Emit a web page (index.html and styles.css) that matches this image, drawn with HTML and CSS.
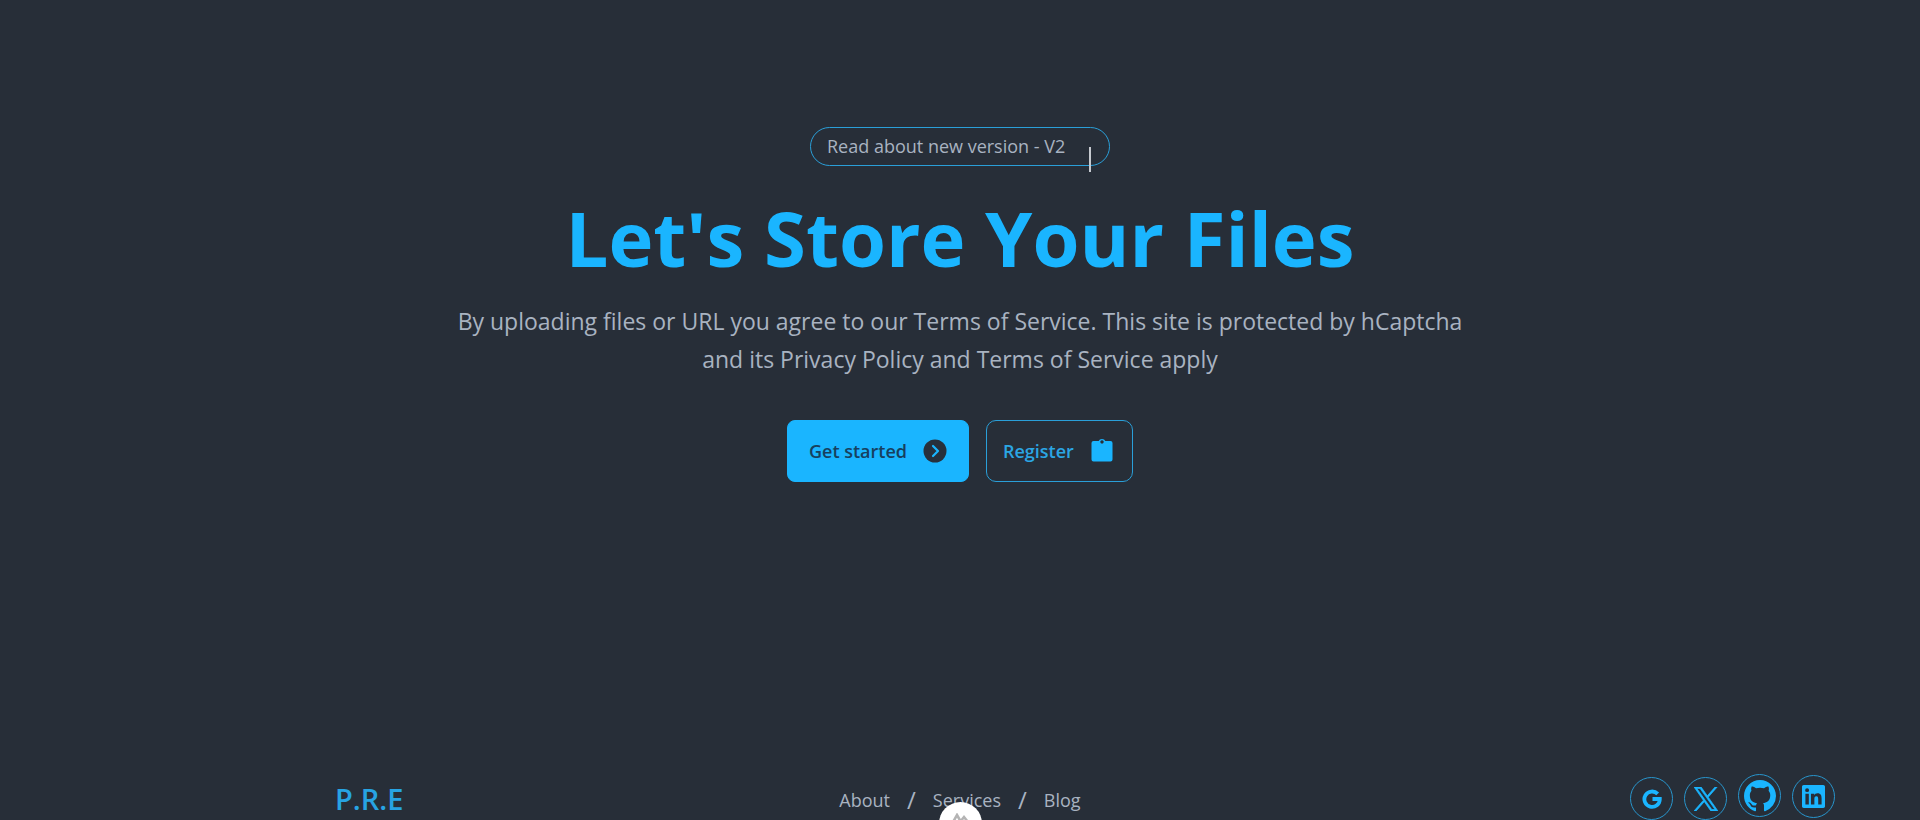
FILE: index.html
```html
<!DOCTYPE html>
<html lang="en">
<head>
<meta charset="utf-8">
<meta name="viewport" content="width=device-width, initial-scale=1">
<title>Let's Store Your Files</title>
<link rel="stylesheet" href="styles.css">
</head>
<body>
<main class="hero">
  <a class="version" href="#">Read about new version - V2<span class="caret"></span></a>
  <h1 class="title">Let's Store Your Files</h1>
  <p class="lead">By uploading files or URL you agree to our Terms of Service. This site is protected by hCaptcha<br>and its Privacy Policy and Terms of Service apply</p>
  <div class="actions">
    <button class="btn btn-primary" type="button">Get started
      <svg class="icon" viewBox="0 0 24 24" aria-hidden="true"><circle cx="12" cy="12" r="11.5" fill="#27303c"/><path d="M10 7l5 5-5 5" fill="none" stroke="#1ab5ff" stroke-width="2.2" stroke-linecap="round" stroke-linejoin="round"/></svg>
    </button>
    <button class="btn btn-outline" type="button">Register
      <svg class="icon" viewBox="0 0 24 24" aria-hidden="true"><path fill="#1ab5ff" fill-rule="evenodd" d="M3.500 2H8.700Q9.500 0 12 0T15.300 2H20.500Q22.500 2 22.500 4V20.500Q22.500 22.500 20.500 22.500H3.500Q1.500 22.500 1.500 20.500V4Q1.500 2 3.500 2ZM12 1.200a1.700 1.700 0 1 0 .01 0Z"/></svg>
    </button>
  </div>
</main>
<footer class="footer">
  <a class="brand" href="#">P.R.E</a>
  <nav class="links" aria-label="Footer">
    <a href="#">About</a><span class="slash">/</span><a href="#">Services</a><span class="slash">/</span><a href="#">Blog</a>
  </nav>
  <div class="social">
    <a href="#" aria-label="Google"><svg width="20" height="20" viewBox="0 0 20 20"><path d="M15.700 4.900A7.700 7.700 0 1 0 17.800 10H10.500" fill="none" stroke="currentColor" stroke-width="3.800"/></svg></a>
    <a href="#" aria-label="X"><svg width="24" height="24" viewBox="0 0 24 24"><path fill="currentColor" stroke="currentColor" stroke-width=".7" d="M14.258 10.152 23.176 0h-2.113l-7.747 8.813L7.133 0H0l9.352 13.328L0 23.973h2.113l8.176-9.309 6.531 9.309h7.133zm-2.895 3.293-.949-1.328L2.875 1.560h3.246l6.086 8.523.945 1.328 7.910 11.078h-3.246z"/></svg></a>
    <a class="github" href="#" aria-label="GitHub"><svg width="32" height="32" viewBox="0 0 16 16"><path fill="currentColor" d="M8 0C3.580 0 0 3.580 0 8c0 3.540 2.290 6.530 5.470 7.590.4.070.55-.17.55-.38 0-.19-.01-.82-.01-1.490-2.010.37-2.530-.49-2.690-.94-.09-.23-.48-.94-.82-1.130-.28-.15-.68-.52-.01-.53.63-.01 1.080.58 1.230.82.72 1.210 1.870.87 2.330.66.07-.52.28-.87.51-1.070-1.780-.2-3.640-.89-3.640-3.950 0-.87.31-1.590.82-2.150-.08-.2-.36-1.020.08-2.120 0 0 .67-.21 2.200.82.64-.18 1.320-.27 2-.27s1.360.09 2 .27c1.530-1.040 2.200-.82 2.200-.82.44 1.100.16 1.920.08 2.120.51.56.82 1.270.82 2.150 0 3.070-1.870 3.750-3.650 3.950.29.25.54.73.54 1.480 0 1.070-.01 1.930-.01 2.200 0 .21.15.46.55.38A8.010 8.010 0 0 0 16 8c0-4.420-3.580-8-8-8z"/></svg></a>
    <a class="linkedin" href="#" aria-label="LinkedIn"><svg width="23" height="23" viewBox="0 0 24 24"><path fill="currentColor" d="M20.450 20.450h-3.550v-5.570c0-1.330-.03-3.040-1.850-3.040-1.850 0-2.140 1.450-2.140 2.940v5.670H9.350V9h3.410v1.560h.05c.48-.9 1.640-1.850 3.370-1.850 3.600 0 4.270 2.370 4.270 5.460v6.280zM5.340 7.430a2.060 2.060 0 1 1 0-4.130 2.060 2.060 0 0 1 0 4.130zm1.780 13.020H3.560V9h3.560v11.450zM22.220 0H1.770C.79 0 0 .77 0 1.730v20.540C0 23.230.79 24 1.770 24h20.450c.98 0 1.780-.77 1.780-1.730V1.730C24 .77 23.200 0 22.220 0z"/></svg></a>
  </div>
</footer>
<button class="to-top" type="button" aria-label="Back to top"><svg width="18" height="14" viewBox="0 0 18 14"><path d="M1 9L5 2l4 7M8 9l4-5 4 5" fill="none" stroke="#b4b4b4" stroke-width="2.600"/></svg></button>
</body>
</html>
```
FILE: styles.css
```css
* { box-sizing: border-box; }
body {
  margin: 0;
  min-height: 100vh;
  overflow: hidden;
  background: #272e38;
  color: #a9b3c1;
  font: 18px/28px "Open Sans", "Noto Sans", sans-serif;
}
a { color: inherit; text-decoration: none; }
.hero {
  display: flex;
  flex-direction: column;
  align-items: center;
  padding: 127px 24px 0;
  text-align: center;
}
.version {
  position: relative;
  width: 300px;
  padding: 4px 16px 5px;
  border: 1px solid #2a9fd8;
  border-radius: 20px;
  text-align: left;
  white-space: nowrap;
}
.caret {
  position: absolute;
  top: 19px;
  right: 18px;
  width: 2px;
  height: 25px;
  background: #c6cad0;
}
.title {
  margin: 24px 0 0;
  color: #1ab5ff;
  font-size: 76px;
  line-height: 96px;
  font-weight: 700;
}
.lead {
  margin: 16px 0 0;
  font-size: 23px;
  line-height: 38px;
}
.actions { display: flex; gap: 17px; margin-top: 42px; }
.btn {
  display: flex;
  align-items: center;
  justify-content: space-between;
  height: 62px;
  padding: 0 18px 0 16px;
  border: 1px solid #2a9fd8;
  border-radius: 8px;
  font: 600 18px/28px "Open Sans", "Noto Sans", sans-serif;
}
.icon { width: 24px; height: 24px; }
.btn-primary { width: 182px; padding: 0 21px; border-color: #1ab5ff; background: #1ab5ff; color: #17405e; }
.btn-outline { width: 147px; border-radius: 10px; background: transparent; color: #2ba6e4; }
.footer {
  display: grid;
  grid-template-columns: 1fr auto 1fr;
  align-items: end;
  margin-top: 292px;
  padding: 0 85px;
}
.brand { margin-left: 250px; color: #27a4e3; font-size: 29px; line-height: 42px; font-weight: 600; }
.links { display: flex; align-items: center; line-height: 40px; }
.slash { padding: 0 17px; font-size: 24px; }
.social { display: flex; align-items: flex-end; justify-content: flex-end; gap: 11px; color: #1ab5ff; }
.social a {
  display: grid;
  place-items: center;
  width: 43px;
  height: 43px;
  border: 1px solid #2795cc;
  border-radius: 50%;
}
.social .github { margin-bottom: 3px; }
.social .linkedin { margin-bottom: 2px; }
.to-top {
  position: fixed;
  left: 50%;
  bottom: -25px;
  display: flex;
  justify-content: center;
  width: 43px;
  height: 43px;
  margin-left: -21px;
  padding: 11px 0 0;
  border: 0;
  border-radius: 50%;
  background: #fff;
}
```
